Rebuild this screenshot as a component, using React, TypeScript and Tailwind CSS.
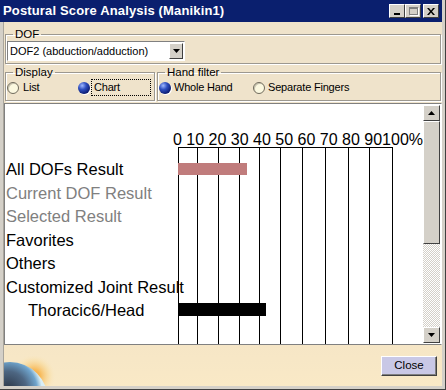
import React from "react"

const rows = [
  { label: "All DOFs Result", tone: "text-black", indent: false },
  { label: "Current DOF Result", tone: "text-[#808080]", indent: false },
  { label: "Selected Result", tone: "text-[#808080]", indent: false },
  { label: "Favorites", tone: "text-black", indent: false },
  { label: "Others", tone: "text-black", indent: false },
  { label: "Customized Joint Result", tone: "text-black", indent: false },
  { label: "Thoracic6/Head", tone: "text-black", indent: true },
]

const gridX = [5, 24, 45, 66, 86, 107, 129, 152, 175, 196, 219]

function Radio({ checked }: { checked?: boolean }) {
  if (checked) {
    return (
      <span className="w-[12px] h-[12px] rounded-full shrink-0 bg-[radial-gradient(circle_at_35%_30%,#9fb8ff_0%,#2f4fc0_35%,#0a1a70_75%,#050c40_100%)] shadow-[1px_1px_0_#ffffff]" />
    )
  }
  return (
    <span className="w-[12px] h-[12px] rounded-full shrink-0 bg-[#fbf8e0] border border-[#6f6a5c] shadow-[inset_1px_1px_0_#c9c4b0]" />
  )
}

function Group({ title, className, children }: { title: string; className?: string; children: React.ReactNode }) {
  return (
    <fieldset className={`border border-[#9c9890] shadow-[inset_1px_1px_0_#ffffff,1px_1px_0_#ffffff] rounded-none ${className ?? ""}`}>
      <legend className="ml-[6px] px-[2px] text-[11.5px] leading-[12px] text-black">{title}</legend>
      {children}
    </fieldset>
  )
}

function TitleButton({ children, disabled }: { children: React.ReactNode; disabled?: boolean }) {
  return (
    <div className={`w-[16px] h-[14px] bg-[#d4d0c8] border border-t-white border-l-white border-r-[#404040] border-b-[#404040] flex items-center justify-center ${disabled ? "text-[#808080]" : "text-black"}`}>
      {children}
    </div>
  )
}

export default function App() {
  return (
    <div className="w-[446px] h-[390px] bg-[#d4d0c8] font-['Liberation_Sans',Arial,sans-serif] overflow-hidden flex flex-col pr-[3px] pb-[3px] border-r border-b border-[#404040]">
      {/* title bar */}
      <div className="h-[22px] shrink-0 bg-[#0a1f6e] flex items-center pl-[3px] pr-[3px]">
        <span className="text-white font-bold text-[13px] tracking-[0.15px] flex-1">Postural Score Analysis (Manikin1)</span>
        <div className="flex items-center">
          <TitleButton>
            <span className="w-[6px] h-[2px] bg-black mt-[6px]" />
          </TitleButton>
          <TitleButton disabled>
            <span className="w-[9px] h-[8px] border border-[#808080] border-t-2 shadow-[1px_1px_0_#ffffff]" />
          </TitleButton>
          <div className="w-[2px]" />
          <TitleButton>
            <svg width="8" height="7" viewBox="0 0 8 7">
              <path d="M0 0h2l2 2.5L6 0h2L5 3.5 8 7H6L4 4.5 2 7H0l3-3.5z" fill="#000" />
            </svg>
          </TitleButton>
        </div>
      </div>

      {/* body */}
      <div className="flex-1 flex flex-col ml-[3px] bg-[#efe3cb] border-l border-[#a9a59c]">
        <div className="px-[1px] pt-[6px]">
          <Group title="DOF" className="px-[1px] pb-[2px] pt-[1px]">
            <div className="w-[178px] h-[20px] bg-white border border-t-[#808080] border-l-[#808080] border-r-white border-b-white flex items-center">
              <span className="flex-1 pl-[2px] text-[11px] text-black whitespace-nowrap">DOF2 (abduction/adduction)</span>
              <div className="w-[14px] h-[16px] mr-[1px] bg-[#d4d0c8] border border-t-white border-l-white border-r-[#404040] border-b-[#404040] flex items-center justify-center">
                <svg width="7" height="4" viewBox="0 0 7 4">
                  <path d="M0 0h7L3.5 4z" fill="#000" />
                </svg>
              </div>
            </div>
          </Group>
        </div>

        <div className="flex gap-[2px] px-[1px] pt-[2px]">
          <Group title="Display" className="w-[150px] h-[35px] px-[1px]">
            <div className="flex items-center h-[19px] text-[11px] tracking-[-0.2px]">
              <Radio />
              <span className="ml-[4px] w-[55px]">List</span>
              <Radio checked />
              <span className="ml-[1px] px-[2px] h-[17px] w-[60px] flex items-center border border-dotted border-black">Chart</span>
            </div>
          </Group>
          <Group title="Hand filter" className="flex-1 h-[35px] px-[1px]">
            <div className="flex items-center h-[19px] text-[11px] tracking-[-0.2px]">
              <Radio checked />
              <span className="ml-[3px] w-[79px]">Whole Hand</span>
              <Radio />
              <span className="ml-[3px]">Separate Fingers</span>
            </div>
          </Group>
        </div>

        {/* chart panel */}
        <div className="mt-[2px] h-[242px] bg-white border border-t-[#808080] border-l-[#808080] border-r-white border-b-[#808080] flex">
          <div className="flex-1 flex">
            <div className="w-[168px] pt-[54px] pl-px">
              {rows.map((r) => (
                <div
                  key={r.label}
                  className={`h-[23.5px] leading-[23.5px] text-[16.5px] whitespace-nowrap ${r.tone} ${r.indent ? "pl-[22px]" : ""}`}
                >
                  {r.label}
                </div>
              ))}
            </div>
            <div className="flex-1 flex flex-col pt-[26px]">
              <div className="h-[16px] leading-[20px] text-[16px] text-black whitespace-nowrap">0 10 20 30 40 50 60 70 80 90100%</div>
              <svg width="240" height="198" className="block">
                <line x1={gridX[0]} y1="1.5" x2={gridX[gridX.length - 1]} y2="1.5" stroke="#000" strokeWidth="1" />
                {gridX.map((x) => (
                  <line key={x} x1={x + 0.5} y1="1" x2={x + 0.5} y2="198" stroke="#000" strokeWidth="1" />
                ))}
                <rect x={gridX[0]} y="17" width="69" height="12" fill="#c07c7c" />
                <rect x={gridX[0]} y="157" width="88" height="13" fill="#000" />
              </svg>
            </div>
          </div>
          {/* scrollbar */}
          <div className="w-[17px] mt-px mb-px mr-px flex flex-col bg-[repeating-conic-gradient(#d4d0c8_0%_25%,#ffffff_0%_50%)] bg-[length:2px_2px]">
            <div className="h-[16px] bg-[#d4d0c8] border border-t-white border-l-white border-r-[#404040] border-b-[#404040] flex items-center justify-center">
              <svg width="7" height="4" viewBox="0 0 7 4">
                <path d="M3.5 0L7 4H0z" fill="#000" />
              </svg>
            </div>
            <div className="h-[123px] bg-[#d4d0c8] border border-t-white border-l-white border-r-[#404040] border-b-[#404040]" />
            <div className="flex-1" />
            <div className="h-[16px] bg-[#d4d0c8] border border-t-white border-l-white border-r-[#404040] border-b-[#404040] flex items-center justify-center">
              <svg width="7" height="4" viewBox="0 0 7 4">
                <path d="M0 0h7L3.5 4z" fill="#000" />
              </svg>
            </div>
          </div>
        </div>

        {/* footer */}
        <div className="flex-1 flex items-start justify-between bg-[linear-gradient(180deg,#f6e6c6,#f9e9c6)]">
          <svg width="52" height="30" viewBox="0 0 52 30" className="self-end">
            <defs>
              <radialGradient id="glow" cx="30" cy="20" r="22" gradientUnits="userSpaceOnUse">
                <stop offset="0" stopColor="#f39a2e" />
                <stop offset="0.3" stopColor="#f7bb5c" />
                <stop offset="0.7" stopColor="#f8dca0" stopOpacity="0.6" />
                <stop offset="1" stopColor="#f9e9c6" stopOpacity="0" />
              </radialGradient>
              <radialGradient id="planet" cx="4" cy="34" r="34" gradientUnits="userSpaceOnUse">
                <stop offset="0" stopColor="#2a3444" />
                <stop offset="0.55" stopColor="#4d6682" />
                <stop offset="0.85" stopColor="#6fa4cc" />
                <stop offset="1" stopColor="#d9eef5" />
              </radialGradient>
            </defs>
            <rect x="0" y="0" width="52" height="30" fill="url(#glow)" />
            <circle cx="6" cy="44" r="38" fill="url(#planet)" />
          </svg>
          <button className="mt-[11px] mr-[5px] w-[56px] h-[20px] bg-[#c9c8e6] border border-t-white border-l-white border-r-[#404040] border-b-[#404040] shadow-[inset_-1px_-1px_0_#808080] text-[11.5px] text-black flex items-center justify-center">
            Close
          </button>
        </div>
      </div>
    </div>
  )
}
